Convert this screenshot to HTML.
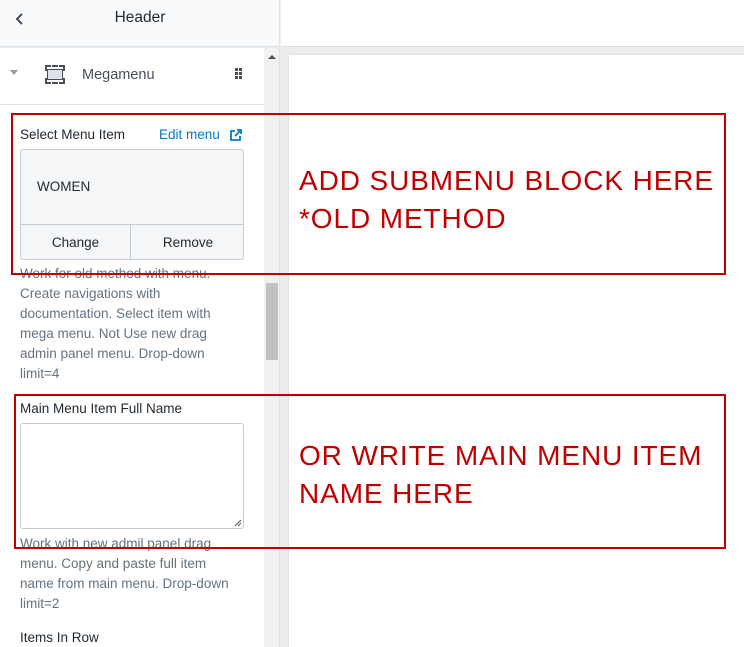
<!DOCTYPE html>
<html><head><meta charset="utf-8"><style>
*{box-sizing:border-box;margin:0;padding:0}
body{width:744px;height:647px;overflow:hidden;position:relative;background:#ebedef;font-family:"Liberation Sans",Arial,sans-serif;color:#212b36}
.abs{position:absolute}
.lhead{left:0;top:0;width:280px;height:47px;background:#f9fafb;border-bottom:1px solid #dfe3e8;border-right:1px solid #dfe3e8}
.rhead{left:281px;top:0;width:463px;height:47px;background:#fff;border-bottom:1px solid #dfe3e8}
.panel{left:0;top:48px;width:264px;height:599px;background:#fff}
.sb{left:264px;top:48px;width:16px;height:599px;background:#f1f1f1;border-right:1px solid #dfe3e8}
.card{left:289px;top:55px;width:455px;height:592px;background:#fff;box-shadow:0 0 2px rgba(0,0,0,.15)}
.t{font-size:13.5px;color:#212b36}
.help{font-size:13.5px;color:#637381;line-height:20px;white-space:nowrap}
.red{border:2px solid #c00000}
.big{color:#c00000;font-size:28px;line-height:38px;letter-spacing:0.9px}
.dot{position:absolute;width:3px;height:3px;background:#454f5b}
</style></head><body>
<div class="abs lhead"></div>
<div class="abs rhead"></div>
<svg class="abs" style="left:14px;top:12px" width="10" height="14"><path d="M8 2 L3 7 L8 12" stroke="#454f5b" stroke-width="2" fill="none"/></svg>
<div class="abs" style="left:0;width:280px;top:9px;text-align:center;font-size:15.5px;color:#212b36">Header</div>
<div class="abs panel"></div>
<div class="abs sb"></div>
<svg class="abs" style="left:267px;top:54px" width="10" height="6"><path d="M1 5 L5 1 L9 5Z" fill="#505050"/></svg>
<div class="abs" style="left:266px;top:283px;width:12px;height:77px;background:#c1c1c1"></div>
<div class="abs card"></div>
<svg class="abs" style="left:10px;top:70px" width="10" height="6"><path d="M0 0 L8 0 L4 5Z" fill="#919eab"/></svg>
<div class="abs" style="left:45px;top:65px;width:20px;height:19px;border:2px dashed #454f5b;border-radius:1px"></div>
<div class="abs" style="left:47px;top:69px;width:16px;height:11px;background:#dfe3e8;border:1.5px solid #454f5b"></div>
<div class="abs t" style="left:82px;top:67px;font-size:14.5px;color:#454f5b">Megamenu</div>
<div class="dot" style="left:235px;top:68px"></div><div class="dot" style="left:239px;top:68px"></div>
<div class="dot" style="left:235px;top:72px"></div><div class="dot" style="left:239px;top:72px"></div>
<div class="dot" style="left:235px;top:76px"></div><div class="dot" style="left:239px;top:76px"></div>
<div class="abs" style="left:0;top:104px;width:264px;height:1px;background:#dfe3e8"></div>
<div class="abs t" style="left:20px;top:127px">Select Menu Item</div>
<div class="abs" style="left:159px;top:127px;font-size:13.5px;color:#007ace">Edit menu</div>
<svg class="abs" style="left:229px;top:128px" width="14" height="14"><path d="M6 3H2v9h9V8M8 2h4v4M12 2 6 8" stroke="#007ace" stroke-width="1.8" fill="none"/></svg>
<div class="abs" style="left:20px;top:149px;width:224px;height:111px;border:1px solid #c4cdd5;border-radius:3px;background:#f4f6f8;overflow:hidden">
<div style="position:absolute;left:16px;top:29px;font-size:13.5px;color:#212b36">WOMEN</div>
<div style="position:absolute;left:0;top:74px;width:224px;height:37px;border-top:1px solid #c4cdd5;display:flex">
<div style="width:110px;border-right:1px solid #c4cdd5;text-align:center;line-height:35px;font-size:13.5px;color:#212b36">Change</div>
<div style="flex:1;text-align:center;line-height:35px;font-size:13.5px;color:#212b36">Remove</div></div></div>
<div class="abs help" style="left:20px;top:264px">Work for old method with menu.<br>Create navigations with<br>documentation. Select item with<br>mega menu. Not Use new drag<br>admin panel menu. Drop-down<br>limit=4</div>
<div class="abs t" style="left:20px;top:401px">Main Menu Item Full Name</div>
<div class="abs" style="left:20px;top:423px;width:224px;height:106px;border:1px solid #c4cdd5;border-radius:3px;background:#fff"></div>
<svg class="abs" style="left:234px;top:519px" width="8" height="8"><path d="M1 7 7 1M4 7 7 4" stroke="#555" stroke-width="1"/></svg>
<div class="abs help" style="left:20px;top:534px">Work with new admil panel drag<br>menu. Copy and paste full item<br>name from main menu. Drop-down<br>limit=2</div>
<div class="abs t" style="left:20px;top:630px">Items In Row</div>
<div class="abs red" style="left:11px;top:113px;width:715px;height:162px"></div>
<div class="abs red" style="left:14px;top:394px;width:712px;height:155px"></div>
<div class="abs big" style="left:299px;top:162px">ADD SUBMENU BLOCK HERE<br>*OLD METHOD</div>
<div class="abs big" style="left:299px;top:437px">OR WRITE MAIN MENU ITEM<br>NAME HERE</div>
</body></html>
